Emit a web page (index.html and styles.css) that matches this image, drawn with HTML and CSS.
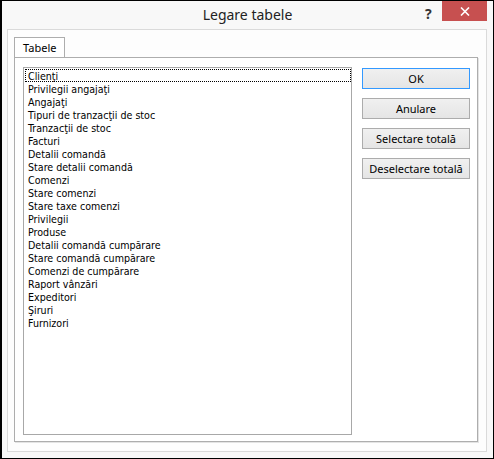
FILE: index.html
```html
<!DOCTYPE html>
<html lang="ro">
  <head>
    <meta charset="UTF-8" />
    <title>Legare tabele</title>
    <link rel="stylesheet" href="styles.css">
  </head>
  <body>
    <div class="window">
      <div class="titlebar">
        <span class="title">Legare tabele</span>
        <span class="help">?</span>
        <span class="close">
          <svg width="10" height="9" viewBox="0 0 10 9">
            <path d="M1 0.5 L9 8.5 M9 0.5 L1 8.5" stroke="#fff" stroke-width="1.6" />
          </svg>
        </span>
      </div>

      <div class="frame">
        <div class="tabs">
          <div class="tab">Tabele</div>
        </div>
        <div class="pane">
          <ul class="listbox">
            <li class="focused">Clienţi</li>
            <li>Privilegii angajaţi</li>
            <li>Angajaţi</li>
            <li>Tipuri de tranzacţii de stoc</li>
            <li>Tranzacţii de stoc</li>
            <li>Facturi</li>
            <li>Detalii comandă</li>
            <li>Stare detalii comandă</li>
            <li>Comenzi</li>
            <li>Stare comenzi</li>
            <li>Stare taxe comenzi</li>
            <li>Privilegii</li>
            <li>Produse</li>
            <li>Detalii comandă cumpărare</li>
            <li>Stare comandă cumpărare</li>
            <li>Comenzi de cumpărare</li>
            <li>Raport vânzări</li>
            <li>Expeditori</li>
            <li>Şiruri</li>
            <li>Furnizori</li>
          </ul>
          <div class="buttons">
            <button class="default">OK</button>
            <button>Anulare</button>
            <button>Selectare totală</button>
            <button>Deselectare totală</button>
          </div>
        </div>
      </div>
    </div>
  </body>
</html>
```

FILE: styles.css
```css
body {
  margin: 0;
  font-family: "Noto Sans", "Open Sans", sans-serif;
}

.window {
  width: 494px;
  height: 459px;
  box-sizing: border-box;
  border: 1px solid #000;
  border-left-width: 2px;
  background-color: #f8f8f8;
  display: flex;
  flex-direction: column;
}

.titlebar {
  position: relative;
  height: 29px;
  text-align: center;
}

.title {
  display: inline-block;
  margin-top: 4px;
  font-size: 14px;
  color: #222;
}

.help {
  position: absolute;
  left: 423px;
  top: 3px;
  font-size: 14px;
  font-weight: bold;
  color: #333;
}

.close {
  position: absolute;
  left: 440px;
  top: 0;
  width: 45px;
  height: 20px;
  background-color: #c75050;
  display: flex;
  align-items: center;
  justify-content: center;
}

.frame {
  margin: 0 6px 6px 5px;
  flex: 1;
  border: 1px solid #dadada;
  background-color: #fdfdfd;
  padding: 7px 8px 9px 6px;
  display: flex;
  flex-direction: column;
}

.tabs {
  display: flex;
  height: 20px;
}

.tab {
  width: 51px;
  height: 20px;
  box-sizing: border-box;
  border: 1px solid #adadad;
  border-bottom: none;
  background-color: #fff;
  font-size: 11px;
  line-height: 19px;
  padding-left: 8px;
  color: #000;
  position: relative;
  z-index: 1;
}

.pane {
  flex: 1;
  border: 1px solid #adadad;
  box-shadow: 1px 1px 0 #e3e3e3;
  background-color: #fff;
  padding: 9px 7px 6px 8px;
  display: flex;
  gap: 10px;
}

.listbox {
  list-style: none;
  margin: 0;
  padding: 1px 0 0 1px;
  width: 329px;
  height: 368px;
  box-sizing: border-box;
  border: 1px solid #a8a8a8;
  font-family: "DejaVu Sans Condensed", "DejaVu Sans", sans-serif;
  font-size: 10.6px;
  color: #000;
}

.listbox li {
  padding-left: 2px;
  height: 13px;
  box-sizing: border-box;
  border: 1px solid transparent;
  line-height: 12px;
}

.listbox li.focused {
  border: 1px dotted #000;
}

.buttons {
  display: flex;
  flex-direction: column;
  gap: 9px;
  padding-top: 1px;
}

button {
  width: 108px;
  height: 21px;
  border: 1px solid #acacac;
  background: linear-gradient(#f0f0f0, #e5e5e5);
  font-family: "Noto Sans", "Open Sans", sans-serif;
  font-size: 11px;
  color: #000;
  padding: 0;
}

button.default {
  border-color: #3399ff;
}
```
